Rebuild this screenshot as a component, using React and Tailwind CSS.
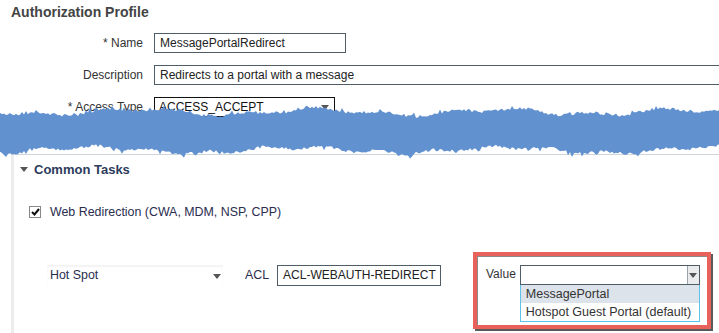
import React from 'react'

const rand = (i, seed) => {
  const x = Math.sin(i * 12.9898 + seed * 78.233) * 43758.5453
  return x - Math.floor(x)
}

// torn blue band drawn over the form
const TornBand = () => {
  const top = []
  const bottom = []
  for (let x = 0; x <= 720; x += 2) {
    const spikeT = rand(x, 3) > 0.9 ? -3 : 0
    const spikeB = rand(x, 4) > 0.9 ? 3 : 0
    const t = 12 + 2.6 * Math.sin(x / 29) + 1.8 * Math.sin(x / 11 + 1.3) + (rand(x, 1) - 0.5) * 3 + spikeT
    const b = 50 + 2.8 * Math.sin(x / 33 + 2) + 1.6 * Math.sin(x / 9 + 0.4) + (rand(x, 2) - 0.5) * 3 + spikeB
    top.push(`${x},${t.toFixed(1)}`)
    bottom.unshift(`${x},${b.toFixed(1)}`)
  }
  const d = `M${top.join(' L')} L${bottom.join(' L')} Z`
  return (
    <svg className="absolute left-0 top-[100px]" width="719" height="62" viewBox="0 0 719 62">
      <path d={d} fill="#6291d0" />
    </svg>
  )
}

const Arrow = ({ className = '' }) => (
  <svg className={className} width="8" height="5" viewBox="0 0 8 5">
    <path d="M0 0 L8 0 L4 5 Z" fill="#555" />
  </svg>
)

const FormRow = ({ label, children }) => (
  <div className="flex items-center h-[20px]">
    <div className="w-[143px] shrink-0 text-right text-[12px] text-[#333]">{label}</div>
    <div className="ml-[11px] shrink-0">{children}</div>
  </div>
)

export default function App() {
  return (
    <div className="relative w-[719px] h-[333px] overflow-hidden bg-white font-['Liberation_Sans',Arial,sans-serif]">
      <div className="pl-[11px] pt-[4px] text-[14px] font-bold text-[#444] leading-[17px]">Authorization Profile</div>

      <div className="mt-[12px] flex flex-col gap-[12px]">
        <FormRow label="* Name">
          <div className="w-[192px] h-[20px] border border-[#4f5d68] px-[5px] text-[12px] leading-[18px] text-[#222]">MessagePortalRedirect</div>
        </FormRow>
        <FormRow label="Description">
          <div className="w-[600px] h-[20px] border border-[#4f5d68] px-[5px] text-[12px] leading-[18px] text-[#222]">Redirects to a portal with a message</div>
        </FormRow>
        <FormRow label="* Access Type">
          <div className="w-[181px] h-[20px] border border-[#111] pl-[4px] pr-[5px] text-[12px] leading-[18px] text-[#111] flex items-center justify-between">
            <span>ACCESS_ACCEPT</span>
            <Arrow />
          </div>
        </FormRow>
      </div>

      <div className="mt-[37px] ml-[11px] h-[200px] border-l-[3px] border-l-[#ececec] border-t border-t-[#cfd6da]">
        <div className="flex items-center gap-[6px] pl-[6px] pt-[5px]">
          <Arrow />
          <span className="text-[13px] font-bold text-[#2d3b5c]">Common Tasks</span>
        </div>

        <div className="flex items-center pl-[15px] mt-[23px]">
          <div className="w-[12px] h-[12px] border border-[#888] bg-white flex items-center justify-center">
            <svg width="9" height="8" viewBox="0 0 9 8">
              <path d="M1 4 L3.5 6.5 L8 1" stroke="#111" strokeWidth="2" fill="none" />
            </svg>
          </div>
          <span className="ml-[9px] text-[12.4px] text-[#2a2d4f]">Web Redirection (CWA, MDM, NSP, CPP)</span>
        </div>

        <div className="flex items-center mt-[44px] h-[20px]">
          <div className="ml-[33px] w-[176px] h-[20px] pl-[3px] pr-[2px] flex items-center justify-between shadow-[inset_0_2px_2px_rgba(0,0,0,0.05)]">
            <span className="text-[12.4px] text-[#2a2d4f]">Hot Spot</span>
            <Arrow className="mt-[2px]" />
          </div>
          <span className="ml-[22px] text-[12.4px] text-[#2a2d4f]">ACL</span>
          <div className="ml-[8px] w-[164px] h-[21px] border border-[#4f5d68] pl-[5px] text-[12px] leading-[19px] text-[#222]">ACL-WEBAUTH-REDIRECT</div>
        </div>
      </div>

      <div className="absolute left-[473px] top-[252px] w-[238px] h-[77px] border-[4px] border-[#e8615a] shadow-[2px_2px_0_#5a5a5a,inset_1px_1px_0_#8a8a8a] bg-white">
        <div className="flex pt-[9px] pl-[9px]">
          <span className="text-[12px] text-[#333] leading-[20px] mt-[-1px]">Value</span>
          <div className="ml-[4px] w-[180px]">
            <div className="h-[20px] border border-[#4f5d68] flex justify-end">
              <div className="w-[12px] h-full bg-[#e9ebed] border-l border-[#9aa3aa] flex items-center justify-center">
                <Arrow />
              </div>
            </div>
            <div className="border border-t-0 border-[#5cc2ea] text-[12.5px] text-[#333]">
              <div className="h-[18px] bg-[#dde3ea] pl-[5px] leading-[18px]">MessagePortal</div>
              <div className="h-[18px] pl-[5px] leading-[18px]">Hotspot Guest Portal (default)</div>
            </div>
          </div>
        </div>
      </div>

      <TornBand />
    </div>
  )
}
